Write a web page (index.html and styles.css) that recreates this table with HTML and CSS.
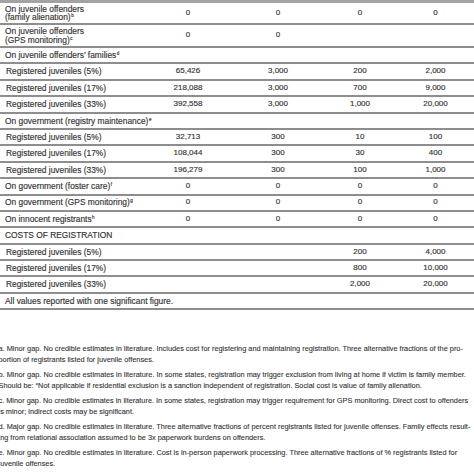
FILE: index.html
```html
<!DOCTYPE html>
<html>
<head>
<meta charset="utf-8">
<link rel="stylesheet" href="styles.css">
</head>
<body>
<div class="page">
  <div class="table">
    <div class="row r1">
      <div class="label">On juvenile offenders<br>(family alienation)<sup>b</sup></div>
      <div class="val">0</div><div class="val">0</div><div class="val">0</div><div class="val">0</div>
    </div>
    <div class="row r2">
      <div class="label">On juvenile offenders<br>(GPS monitoring)<sup>c</sup></div>
      <div class="val">0</div><div class="val">0</div><div class="val"></div><div class="val"></div>
    </div>
    <div class="row">
      <div class="label">On juvenile offenders’ families<sup>d</sup></div>
    </div>
    <div class="row">
      <div class="label sub">Registered juveniles (5%)</div>
      <div class="val">65,426</div><div class="val">3,000</div><div class="val">200</div><div class="val">2,000</div>
    </div>
    <div class="row">
      <div class="label sub">Registered juveniles (17%)</div>
      <div class="val">218,088</div><div class="val">3,000</div><div class="val">700</div><div class="val">9,000</div>
    </div>
    <div class="row">
      <div class="label sub">Registered juveniles (33%)</div>
      <div class="val">392,558</div><div class="val">3,000</div><div class="val">1,000</div><div class="val">20,000</div>
    </div>
    <div class="row">
      <div class="label">On government (registry maintenance)<sup>e</sup></div>
    </div>
    <div class="row">
      <div class="label sub">Registered juveniles (5%)</div>
      <div class="val">32,713</div><div class="val">300</div><div class="val">10</div><div class="val">100</div>
    </div>
    <div class="row">
      <div class="label sub">Registered juveniles (17%)</div>
      <div class="val">108,044</div><div class="val">300</div><div class="val">30</div><div class="val">400</div>
    </div>
    <div class="row">
      <div class="label sub">Registered juveniles (33%)</div>
      <div class="val">196,279</div><div class="val">300</div><div class="val">100</div><div class="val">1,000</div>
    </div>
    <div class="row">
      <div class="label">On government (foster care)<sup>f</sup></div>
      <div class="val">0</div><div class="val">0</div><div class="val">0</div><div class="val">0</div>
    </div>
    <div class="row">
      <div class="label">On government (GPS monitoring)<sup>g</sup></div>
      <div class="val">0</div><div class="val">0</div><div class="val">0</div><div class="val">0</div>
    </div>
    <div class="row">
      <div class="label">On innocent registrants<sup>h</sup></div>
      <div class="val">0</div><div class="val">0</div><div class="val">0</div><div class="val">0</div>
    </div>
    <div class="row">
      <div class="label">COSTS OF REGISTRATION</div>
    </div>
    <div class="row">
      <div class="label sub">Registered juveniles (5%)</div>
      <div class="val"></div><div class="val"></div><div class="val">200</div><div class="val">4,000</div>
    </div>
    <div class="row">
      <div class="label sub">Registered juveniles (17%)</div>
      <div class="val"></div><div class="val"></div><div class="val">800</div><div class="val">10,000</div>
    </div>
    <div class="row">
      <div class="label sub">Registered juveniles (33%)</div>
      <div class="val"></div><div class="val"></div><div class="val">2,000</div><div class="val">20,000</div>
    </div>
    <div class="row">
      <div class="label full">All values reported with one significant figure.</div>
    </div>
  </div>

  <div class="notes">
    <p><span>a. Minor gap. No credible estimates in literature. Includes cost for registering and maintaining registration. Three alternative fractions of the pro-</span><span>portion of registrants listed for juvenile offenses.</span></p>
    <p><span>b. Minor gap. No credible estimates in literature. In some states, registration may trigger exclusion from living at home if victim is family member.</span><span>Should be: “Not applicable if residential exclusion is a sanction independent of registration. Social cost is value of family alienation.</span></p>
    <p><span>c. Minor gap. No credible estimates in literature. In some states, registration may trigger requirement for GPS monitoring. Direct cost to offenders</span><span>is minor; indirect costs may be significant.</span></p>
    <p><span>d. Major gap. No credible estimates in literature. Three alternative fractions of percent registrants listed for juvenile offenses. Family effects result-</span><span>ing from relational association assumed to be 3x paperwork burdens on offenders.</span></p>
    <p><span>e. Minor gap. No credible estimates in literature. Cost is in-person paperwork processing. Three alternative fractions of % registrants listed for</span><span>juvenile offenses.</span></p>
  </div>
</div>
</body>
</html>
```

FILE: styles.css
```css
html, body {
  margin: 0;
  padding: 0;
  background: #ffffff;
  overflow: hidden;
}

.page {
  width: 474px;
  height: 474px;
  overflow: hidden;
  font-family: "Liberation Sans", Arial, sans-serif;
  color: #333333;
}

.table {
  border-top: 3px solid #a3a3a3;
  -webkit-text-stroke: 0.15px #333333;
}

.row {
  display: grid;
  grid-template-columns: 143px 90px 90px 74px 77px;
  align-items: center;
  box-sizing: border-box;
  height: 16.4px;
  border-bottom: 2px solid #8e8e8e;
  font-size: 8.4px;
  line-height: 8.5px;
}

.row.r1 {
  height: 22px;
}

.row.r2 {
  height: 23px;
}

.label {
  padding-left: 5px;
  white-space: nowrap;
}

.label.sub {
  padding-left: 6px;
}

.label.full {
  grid-column: 1 / -1;
}

.val {
  text-align: center;
  font-size: 8px;
}

sup {
  font-size: 4.5px;
  line-height: 0;
  vertical-align: 3px;
  margin-left: 0.5px;
}

.notes {
  margin-top: 32.5px;
  margin-left: -1.5px;
  font-size: 7.35px;
  line-height: 11.5px;
  color: #333333;
  -webkit-text-stroke: 0.1px #333333;
}

.notes p {
  margin: 0 0 3px 0;
}

.notes span {
  display: block;
  white-space: nowrap;
}
```
